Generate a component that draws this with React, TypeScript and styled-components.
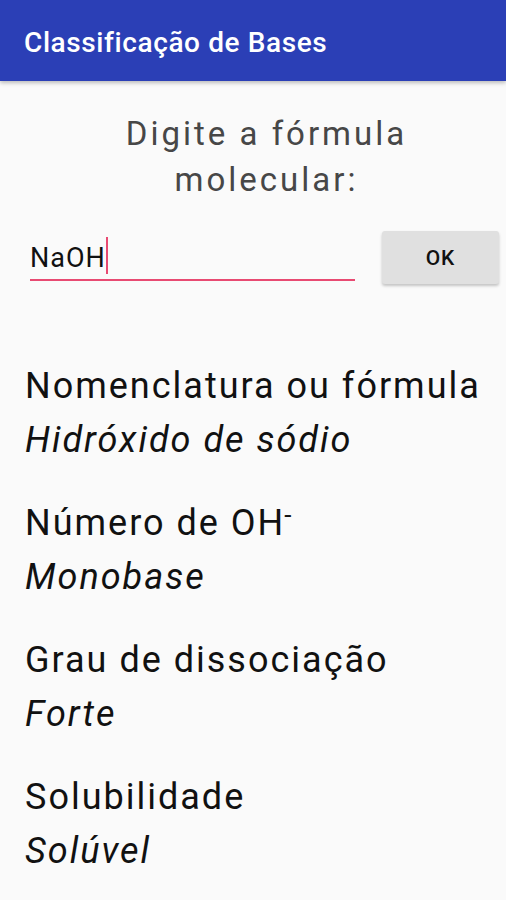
import styled, { createGlobalStyle } from "styled-components";

const GlobalStyle = createGlobalStyle`
  html, body {
    margin: 0;
    padding: 0;
    background: #fafafa;
    font-family: Roboto, "Noto Sans", sans-serif;
  }
`;

const results = [
  { label: "Nomenclatura ou fórmula", value: "Hidróxido de sódio" },
  { label: "Número de OH", sup: "-", value: "Monobase" },
  { label: "Grau de dissociação", value: "Forte" },
  { label: "Solubilidade", value: "Solúvel" },
];

export default function App() {
  return (
    <>
      <GlobalStyle />
      <Screen>
        <AppBar>
          <Title>Classificação de Bases</Title>
        </AppBar>
        <Content>
          <Prompt>
            Digite a fórmula
            <br />
            molecular:
          </Prompt>
          <InputRow>
            <Field>
              <FieldText>NaOH</FieldText>
              <Cursor />
            </Field>
            <OkButton>OK</OkButton>
          </InputRow>
          <Results>
            {results.map((r) => (
              <Result key={r.label}>
                <Label>
                  {r.label}
                  {r.sup && <Sup>{r.sup}</Sup>}
                </Label>
                <Value>{r.value}</Value>
              </Result>
            ))}
          </Results>
        </Content>
      </Screen>
    </>
  );
}

const Screen = styled.div`
  width: 506px;
  height: 900px;
  overflow: hidden;
  background: #fafafa;
`;

const AppBar = styled.header`
  height: 81px;
  background: #2b3fb6;
  display: flex;
  align-items: center;
  padding: 0 24px;
  box-shadow: 0 2px 4px rgba(0, 0, 0, 0.25);
  position: relative;
`;

const Title = styled.h1`
  margin: 3px 0 0 0;
  color: #fff;
  font-size: 28px;
  font-weight: 500;
  letter-spacing: 0.6px;
`;

const Content = styled.main`
  display: flex;
  flex-direction: column;
`;

const Prompt = styled.div`
  margin-top: 30px;
  padding-left: 27px;
  text-align: center;
  color: #474747;
  font-size: 33px;
  line-height: 46px;
  letter-spacing: 3px;
`;

const InputRow = styled.div`
  display: flex;
  align-items: flex-start;
  margin-top: 28px;
  padding: 0 7px 0 30px;
`;

const Field = styled.div`
  width: 325px;
  height: 42px;
  margin-top: 6px;
  border-bottom: 2px solid #e84a72;
  display: flex;
  align-items: center;
`;

const FieldText = styled.span`
  font-size: 27px;
  letter-spacing: 1px;
  color: #111;
`;

const Cursor = styled.span`
  align-self: flex-start;
  width: 2px;
  height: 37px;
  background: #e84a72;
`;

const OkButton = styled.button`
  margin-left: auto;
  width: 117px;
  height: 53px;
  border: none;
  border-radius: 3px;
  background: #e0e0e0;
  box-shadow: 0 2px 3px rgba(0, 0, 0, 0.22);
  font-family: Roboto, sans-serif;
  font-size: 21px;
  font-weight: 500;
  letter-spacing: 1px;
  color: #111;
`;

const Results = styled.section`
  display: flex;
  flex-direction: column;
  gap: 29px;
  margin-top: 75px;
  padding: 0 25px;
`;

const Result = styled.div`
  display: flex;
  flex-direction: column;
`;

const Label = styled.div`
  font-size: 36px;
  line-height: 54px;
  letter-spacing: 2px;
  color: #111;
  white-space: nowrap;
`;

const Sup = styled.sup`
  font-size: 26px;
  line-height: 0;
  letter-spacing: 0;
  vertical-align: 11px;
  margin-left: -1px;
`;

const Value = styled.div`
  font-size: 36px;
  line-height: 54px;
  letter-spacing: 2px;
  font-style: italic;
  color: #111;
`;
